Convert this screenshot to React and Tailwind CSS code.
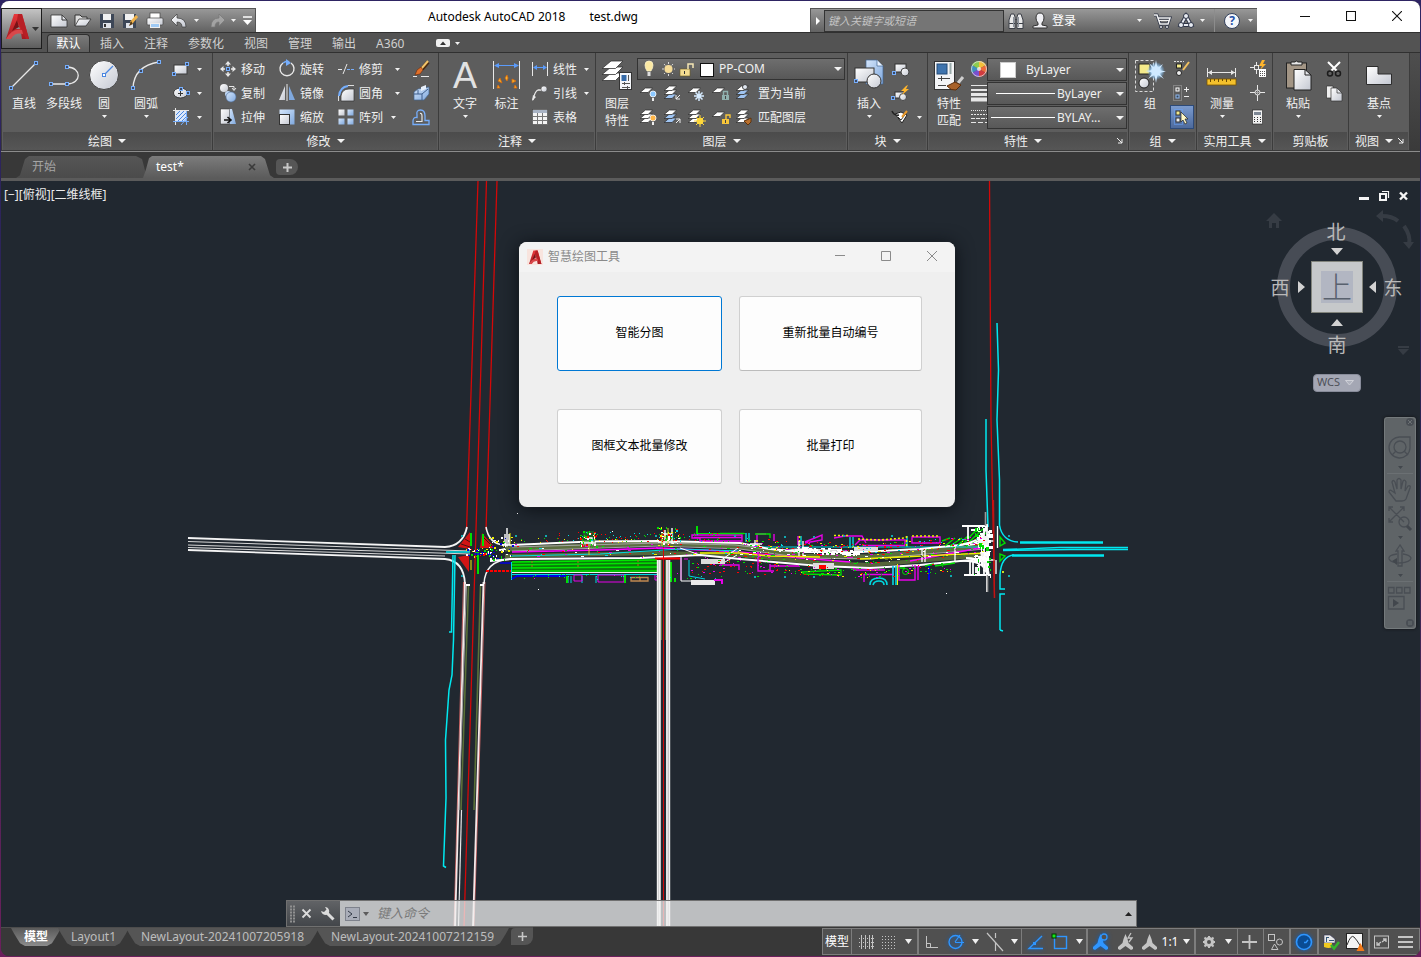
import React from "react";

/* ---------- shared pieces ---------- */

function Svg({ w = 24, h = 24, className = "", children }) {
  return (
    <svg width={w} height={h} viewBox={`0 0 ${w} ${h}`} className={`shrink-0 ${className}`} fill="none" aria-hidden="true">
      {children}
    </svg>
  );
}

function Defs() {
  return (
    <svg width="0" height="0" className="absolute" aria-hidden="true">
      <defs>
        <linearGradient id="metal" x1="0" y1="0" x2="1" y2="1">
          <stop offset="0" stopColor="#ffffff" />
          <stop offset="1" stopColor="#c4c8d2" />
        </linearGradient>
        <linearGradient id="blue" x1="0" y1="0" x2="1" y2="1">
          <stop offset="0" stopColor="#d5e6fb" />
          <stop offset="1" stopColor="#7fa8de" />
        </linearGradient>
        <linearGradient id="red" x1="0" y1="0" x2="0" y2="1">
          <stop offset="0" stopColor="#e8383c" />
          <stop offset="1" stopColor="#a31a20" />
        </linearGradient>
        <radialGradient id="glow">
          <stop offset="0" stopColor="#ffffff" />
          <stop offset="0.5" stopColor="#bfe3ff" />
          <stop offset="1" stopColor="#5da8ec" stopOpacity="0" />
        </radialGradient>
      </defs>
    </svg>
  );
}

const Sq = ({ x, y }) => <rect x={x - 1.5} y={y - 1.5} width="3" height="3" fill="#3b4a66" stroke="#76aefc" />;

function Caret({ className = "" }) {
  return (
    <svg width="5" height="3" viewBox="0 0 5 3" className={`shrink-0 ${className}`} aria-hidden="true">
      <path d="M0 0H5L2.5 3Z" fill="#f2f2f2" />
    </svg>
  );
}

function BigCaret({ className = "" }) {
  return (
    <svg width="8" height="4" viewBox="0 0 8 4" className={`shrink-0 ${className}`} aria-hidden="true">
      <path d="M0 0H8L4 4Z" fill="#f2f2f2" />
    </svg>
  );
}

function Big({ icon, lines, arrow, className = "w-10" }) {
  return (
    <button className={`flex shrink-0 flex-col items-center text-xs text-[#f0f0f0] ${className}`}>
      {icon}
      {lines.map((l) => (
        <span key={l} className="leading-[17px] whitespace-nowrap">{l}</span>
      ))}
      {arrow && <Caret className="mt-[3px]" />}
    </button>
  );
}

function Small({ icon, label, arrow, title, caret = "ml-2" }) {
  return (
    <button className="flex h-6 shrink-0 items-center text-xs whitespace-nowrap text-[#f0f0f0]" aria-label={label || title}>
      {icon}
      {label && <span className="ml-px pt-[2px]">{label}</span>}
      {arrow && <Caret className={label ? caret : "ml-1"} />}
    </button>
  );
}

function Panel({ title, arrow, corner, className, body = "", children }) {
  return (
    <section className={`flex shrink-0 flex-col border-r border-[#3c3c3c] bg-[#5d5d5d] ${className}`}>
      <div className={`flex h-[79px] pt-1 ${body}`}>{children}</div>
      <div className="mx-px flex h-[18px] items-center bg-linear-to-b from-[#4b4b4b] to-[#565656] text-xs whitespace-nowrap text-[#f0f0f0]">
        <h2 className="flex flex-1 items-center justify-center gap-[6px]">
          <span className="pt-[2px]">{title}</span>
          {arrow && <BigCaret />}
        </h2>
        {corner && (
          <Svg w={6} h={6} className="mr-1">
            <path d="M0 0L5 5M5 1V5H1" stroke="#f0f0f0" />
          </Svg>
        )}
      </div>
    </section>
  );
}

/* ---------- ribbon icons ---------- */

const light = "#e8e8e8";

const Line = () => (
  <Svg w={40} h={38}><path d="M7 31L32 6" stroke={light} strokeWidth="1.3" /><Sq x={7} y={31} /><Sq x={32} y={6} /></Svg>
);
const Poly = () => (
  <Svg w={40} h={38}><path d="M7 27H23C38 27 38 10 23 10" stroke={light} strokeWidth="1.3" /><Sq x={7} y={27} /><Sq x={23} y={27} /><Sq x={23} y={10} /></Svg>
);
const Circle = () => (
  <Svg w={40} h={38}><circle cx="20" cy="18" r="14.5" fill="url(#metal)" stroke="#444" /><path d="M20 18L29 9" stroke="#4a86e0" strokeWidth="1.3" /><rect x="18.5" y="16.5" width="3" height="3" fill="#fff" stroke="#4a86e0" /></Svg>
);
const Arc = () => (
  <Svg w={40} h={38}><path d="M7 31Q8 9 33 5" stroke={light} strokeWidth="1.3" /><Sq x={7} y={31} /><Sq x={15} y={14} /><Sq x={33} y={5} /></Svg>
);
const RectI = () => (
  <Svg><rect x="5" y="8" width="13" height="9" fill="url(#metal)" stroke="#3a3a3a" /><Sq x={18} y={7} /><Sq x={5} y={17} /></Svg>
);
const Ellipse = () => (
  <Svg><ellipse cx="11.500" cy="12" rx="7" ry="5" fill="url(#metal)" stroke="#3a3a3a" /><path d="M9 12.500H14M11.500 10V15" stroke="#333" /><Sq x={12} y={8} /><Sq x={19} y={12} /></Svg>
);
const Hatch = () => (
  <Svg><rect x="7" y="6" width="10" height="10" fill="#dbe8fb" /><path d="M7 10L11 6M7 14L15 6M9 16L17 8M13 16L17 12" stroke="#4a86e0" /><path d="M6.500 3V20M4 5.500H20" stroke={light} /><path d="M4 16.500H20M17.500 6V20M12 20L19 12" stroke="#76aefc" /></Svg>
);
const Move = () => (
  <Svg><path d="M12 5V9M12 15V19M5 12H9M15 12H19" stroke={light} strokeWidth="1.400" /><path d="M12 4L9 7.500H15ZM12 20L9 16.500H15ZM4 12L7.500 9V15ZM20 12L16.500 9V15Z" fill={light} /><rect x="10.500" y="10.500" width="3" height="3" stroke="#76aefc" fill="#3b4a66" /></Svg>
);
const Copy = () => (
  <Svg><circle cx="8" cy="7" r="4" fill="url(#metal)" /><circle cx="12" cy="13" r="3" fill="url(#blue)" /><circle cx="15" cy="16" r="5" fill="url(#blue)" stroke="#50719e" strokeWidth="0.600" /><path d="M13 5.500H18V9M16 7L18 9.500L20 7" stroke={light} /></Svg>
);
const Stretch = () => (
  <Svg><path d="M13 4H16L20 19H13Z" fill="url(#blue)" /><rect x="4.500" y="4" width="9" height="15" fill="url(#metal)" stroke="#333" strokeWidth="0.500" /><path d="M8 15H14M11.500 12L15 15L11.500 18" stroke="#111" strokeWidth="1.600" /></Svg>
);
const Rotate = () => (
  <Svg><path d="M8 6A7 7 0 1 0 16 6" stroke={light} strokeWidth="1.400" /><path d="M8 6Q12 3 14 5" stroke="#76aefc" strokeWidth="1.400" /><path d="M11 2L16 6L11 9Z" fill="#76aefc" /></Svg>
);
const Mirror = () => (
  <Svg><path d="M10 5V19H4Z" fill="url(#metal)" /><path d="M14 5V19H20Z" fill="#7fa8de" /><path d="M12 3V20" stroke={light} /></Svg>
);
const Scale = () => (
  <Svg><rect x="4.500" y="4.500" width="15" height="15" fill="url(#blue)" /><rect x="4.500" y="9.500" width="10" height="10" fill="url(#metal)" stroke="#333" /></Svg>
);
const Trim = () => (
  <Svg><path d="M4 12.500H8M9 17L13 7" stroke={light} /><path d="M13 12.500H20" stroke="#76aefc" strokeDasharray="3 1" /></Svg>
);
const Fillet = () => (
  <Svg><path d="M7 20V15Q8 8 15 8H20V20Z" fill="url(#metal)" stroke="#333" strokeWidth="0.700" /><path d="M5 15Q6 6 14 5" stroke="#76aefc" strokeWidth="2" /><path d="M4.500 20V15M14 4.500H20" stroke="#ddd" /></Svg>
);
const ArrayI = () => (
  <Svg><rect x="4.500" y="4.500" width="6" height="6" fill="url(#metal)" /><rect x="13.500" y="4.500" width="6" height="6" fill="url(#blue)" /><rect x="4.500" y="13.500" width="6" height="6" fill="url(#blue)" /><rect x="13.500" y="13.500" width="6" height="6" fill="url(#blue)" /></Svg>
);
const Brush = () => (
  <Svg><path d="M19 5L13 12" stroke="#4a2a10" strokeWidth="4" /><path d="M19 4L12 12" stroke="#f2c46a" strokeWidth="2" /><path d="M12 10L8 13L6 18L11 17L14 13Z" fill="#e2702a" stroke="#6b2a08" strokeWidth="0.600" /><path d="M4 19.500H8M12 19.500H20" stroke={light} /></Svg>
);
const Explode = () => (
  <Svg><path d="M5 11L9 8L20 6L20 13L15 19H5Z" fill="url(#blue)" stroke="#44658f" strokeWidth="0.700" /><path d="M5 13H13L19 8M13 13V19M9 9V13" stroke="#3f5f8d" /><path d="M12 6L17 4V8L12 10Z" fill="#e8f1fd" /></Svg>
);
const Offset = () => (
  <Svg><path d="M4 19.500H20V15.500H16V11Q16 5 11.500 5Q7 5 8 10V12.500Q4 12 4 16Z" stroke="#76aefc" strokeWidth="1.300" /><path d="M7 16.500H13V11Q13 8 11 8.500" stroke={light} strokeWidth="1.200" /></Svg>
);

const Dim = () => (
  <Svg w={40} h={38}>
    <path d="M6.500 4V32M32.500 4V32" stroke={light} /><path d="M8 8.500H31" stroke="#5b9bfa" /><path d="M7 8.500L12 6V11ZM32 8.500L27 6V11Z" fill="#5b9bfa" />
    <path d="M20 24L18 21L20 18L21 21ZM15 26L11 24L13 21ZM25 26L25 22L29 24ZM13 31L10 31L11 28ZM27 31L28 28L30 31Z" fill="#fbb32b" stroke="#d8690f" strokeWidth="0.800" />
  </Svg>
);
const Linear = () => (
  <Svg><path d="M4.500 5V19M19.500 5V19" stroke={light} /><path d="M6 10.500H18" stroke="#5b9bfa" /><path d="M5 10.500L9 8V13ZM19 10.500L15 8V13Z" fill="#5b9bfa" /></Svg>
);
const Leader = () => (
  <Svg><path d="M5 19Q7 10 10 9H14" stroke={light} strokeWidth="1.300" /><path d="M4 20L5 14L8 16Z" fill={light} /><circle cx="16" cy="8" r="3" fill="url(#metal)" stroke="#444" strokeWidth="0.500" /></Svg>
);
const Table = () => (
  <Svg><rect x="4.500" y="4.500" width="15" height="15" fill="#f4f4f4" stroke="#444" strokeWidth="0.600" /><rect x="5" y="5" width="14" height="3" fill="#a9b4c5" /><path d="M9.500 8V19M14.500 8V19M5 11.500H19M5 15.500H19" stroke="#777" /></Svg>
);

const Sheet = ({ y, fill = "#fff", x = 0, s = 1 }) => (
  <path d={`M${x + 6 * s} ${y}H${x + 14 * s}L${x + 9 * s} ${y + 5 * s}H${x}Z`} fill={fill} stroke="#333" strokeWidth="0.800" />
);
const Layers = () => (
  <Svg w={40} h={38}>
    <Sheet x={5} y={16} s={1.5} /><Sheet x={5} y={10} s={1.5} /><Sheet x={5} y={4} s={1.5} />
    <rect x="22.500" y="15.500" width="12" height="17" fill="#f4f6fa" stroke="#333" /><rect x="24.500" y="18" width="5" height="6" fill="#356aa8" /><path d="M31.500 18V24M25 26.500H33M25 30.500H33M27.500 25V28M30.500 29V32" stroke="#555" />
  </Svg>
);
function Stack({ mid = "#fff", bottom = "#fff", badge }) {
  return (
    <Svg>
      <Sheet x={3} y={13} fill={bottom} s={0.9} />
      <Sheet x={3} y={9} fill={mid} s={0.9} />
      <Sheet x={3} y={5} s={0.9} />
      {badge}
    </Svg>
  );
}
function OneSheet({ badge, fill = "#fff" }) {
  return <Svg><Sheet x={3} y={7} fill={fill} s={0.9} />{badge}</Svg>;
}
const Bulb = ({ c = "#8cc8ff", x = 16, y = 13 }) => (
  <g><circle cx={x} cy={y} r="3" fill={c} stroke="#fff" strokeWidth="0.800" /><rect x={x - 1} y={y + 4} width="2" height="3" fill="#eee" /></g>
);
const Lock = ({ c, open }) => (
  <g><rect x="13" y="14" width="7" height="5" fill={c} /><path d={open ? "M17 14V10H21V13" : "M14.500 14V10.500H18.500V14"} stroke={c} strokeWidth="1.400" /><path d="M16.500 15V18" stroke="#444" /></g>
);
const Flake = () => <path d="M14 10V20M9 15H19M10.500 11.500L17.500 18.500M17.500 11.500L10.500 18.500" stroke="#d6ebff" strokeWidth="1.500" />;
const Sun = ({ x = 15, y = 16, c = "#ffd83a" }) => (
  <g stroke={c}><path d={`M${x} ${y - 6}V${y + 6}M${x - 6} ${y}H${x + 6}M${x - 4} ${y - 4}L${x + 4} ${y + 4}M${x + 4} ${y - 4}L${x - 4} ${y + 4}`} /><circle cx={x} cy={y} r="3" fill={c} /></g>
);

const Insert = () => (
  <Svg w={40} h={38}>
    <path d="M17 3H28L34 9V27H17Z" fill="url(#blue)" stroke="#44658f" strokeWidth="0.700" /><path d="M28 3V9H34" fill="#eaf3ff" stroke="#44658f" strokeWidth="0.700" />
    <rect x="6" y="11" width="19" height="14" fill="url(#metal)" stroke="#333" /><circle cx="25" cy="24" r="7" fill="url(#metal)" stroke="#333" /><Sq x={7} y={24} />
  </Svg>
);
const BlockNew = () => (
  <Svg><rect x="6" y="7" width="11" height="8" fill="url(#metal)" stroke="#333" /><circle cx="16" cy="15" r="4" fill="url(#metal)" stroke="#444" /><Sq x={5} y={16} /></Svg>
);
const BlockEdit = () => (
  <Svg><rect x="6" y="11" width="9" height="6" fill="url(#metal)" stroke="#333" /><circle cx="14" cy="16" r="3.500" fill="url(#metal)" stroke="#444" /><path d="M17 5L12 10H15L13 14L20 8H17L19 4Z" fill="#ffb52c" /><Sq x={4} y={17} /></Svg>
);
const BlockAttr = () => (
  <Svg><path d="M6 9L12 7L18 10L13 18Z" fill="#fff" stroke="#222" /><path d="M3 6Q5 11 10 10" stroke="#222" strokeWidth="1.500" /><path d="M9 12L12 15L18 7" stroke="#333" /><path d="M18 6L13 12" stroke="#e99a2c" strokeWidth="2" /></Svg>
);
const MatchProp = () => (
  <Svg w={40} h={38}>
    <rect x="5.500" y="4.500" width="20" height="28" fill="#f3f4f6" stroke="#333" /><rect x="8" y="7" width="10" height="10" fill="#3f74ae" stroke="#244a76" /><path d="M21.500 6V17" stroke="#99aaaa" strokeWidth="2" /><path d="M9 21.500H21M12.500 19V24M9 28.500H17" stroke="#444" />
    <path d="M34 20L29 26" stroke="#cfcfcf" strokeWidth="3" /><path d="M26 25L32 28L27 33Q22 34 18 29Z" fill="#a8622a" stroke="#5a2d0c" />
  </Svg>
);
const Wheel = () => (
  <Svg>
    <path d="M12 12V4A8 8 0 0 1 19 8Z" fill="#f4c03a" /><path d="M12 12L19 8A8 8 0 0 1 19 16Z" fill="#ee6a3a" /><path d="M12 12L19 16A8 8 0 0 1 12 20Z" fill="#d23a3e" /><path d="M12 12V20A8 8 0 0 1 5 16Z" fill="#7a50d0" /><path d="M12 12L5 16A8 8 0 0 1 5 8Z" fill="#3f90c0" /><path d="M12 12L5 8A8 8 0 0 1 12 4Z" fill="#8ccc50" />
    <circle cx="12" cy="12" r="2" fill="#f4f4f4" opacity="0.800" /><circle cx="12" cy="12" r="7.500" stroke="#ddd" strokeWidth="0.800" />
  </Svg>
);
const Weights = () => (
  <Svg><path d="M4 4.500H20" stroke="#e6e6e6" /><path d="M4 9H20" stroke="#e6e6e6" strokeWidth="2" /><path d="M4 13.500H20" stroke="#e6e6e6" strokeWidth="3" /><path d="M4 18.500H20" stroke="#e6e6e6" strokeWidth="4" /></Svg>
);
const Types = () => (
  <Svg><path d="M4 5.500H20" stroke="#e6e6e6" strokeDasharray="1 1" /><path d="M4 9.500H20" stroke="#e6e6e6" strokeDasharray="2 1" /><path d="M4 13.500H20" stroke="#e6e6e6" strokeDasharray="4 1" /><path d="M4 17.500H20" stroke="#e6e6e6" strokeDasharray="5 2" /></Svg>
);

const GroupI = () => (
  <Svg w={40} h={38}>
    <rect x="5.500" y="3.500" width="18" height="31" stroke="#d8d8d8" strokeDasharray="3 2" /><rect x="9" y="7" width="11" height="10" fill="#f4ea8a" stroke="#222" /><circle cx="14" cy="26" r="5" fill="url(#metal)" stroke="#222" />
    <circle cx="26" cy="14" r="9" fill="url(#glow)" /><path d="M26 3L27.500 11L33 7L29 13L36 14.500L29 16L34 22L27.500 17.500L26 26L24.500 17.500L18 22L23 15.500L15 14L23 13L19 6L24.500 11Z" fill="#cfe9ff" />
  </Svg>
);
const GroupEdit = () => (
  <Svg><path d="M4 4.500H14" stroke="#ddd" strokeDasharray="2 1" /><rect x="6.500" y="7" width="5" height="4" fill="#f4ea8a" stroke="#222" /><circle cx="9" cy="16" r="2.500" fill="#eee" stroke="#222" /><path d="M19 5L13 13" stroke="#f0c060" strokeWidth="2" /></Svg>
);
const GroupAdd = () => (
  <Svg><rect x="3.500" y="4.500" width="8" height="15" stroke="#aaa" strokeDasharray="1 1" /><rect x="6" y="7" width="3" height="3" stroke="#fff" /><rect x="6" y="14" width="3" height="3" stroke="#8fb8f0" fill="#334455" /><path d="M14 8.500H19M16.500 6V11M14 15.500H19" stroke="#eee" /></Svg>
);
const GroupSel = () => (
  <span className="flex size-6 items-center justify-center border border-[#2d4a78] bg-linear-to-b from-[#7b9bcf] to-[#4d6a9c]">
    <Svg w={20} h={20}><rect x="2.500" y="2.500" width="8" height="15" stroke="#68a4ff" strokeDasharray="1 1" /><rect x="4" y="4" width="4" height="4" fill="#f4ea8a" stroke="#333" /><rect x="4" y="11" width="4" height="4" fill="#eee" stroke="#333" /><path d="M9 5L16 12H13L15 16L13 17L11 13L9 15Z" fill="#fdf7c4" stroke="#222" strokeWidth="0.700" /></Svg>
  </span>
);
const Measure = () => (
  <Svg w={40} h={38}>
    <path d="M5.500 11V20M33.500 11V20M6 15.500H33" stroke={light} /><path d="M6 15.500L10 13V18ZM33 15.500L29 13V18Z" fill={light} />
    <rect x="5" y="22" width="29" height="6" fill="#f3c02c" stroke="#7a5600" strokeWidth="0.800" /><path d="M8.500 22V25M12.500 22V24M16.500 22V25M20.500 22V24M24.500 22V25M28.500 22V24" stroke="#6b4a00" />
  </Svg>
);
const QuickSel = () => (
  <Svg><path d="M10.500 5V8M10.500 13V17M4 10.500H8" stroke={light} /><rect x="8.500" y="8.500" width="4" height="4" stroke={light} /><path d="M16 3L13 9H16L14 13L20 7H17L19 3Z" fill="#ffb52c" /><rect x="13" y="12" width="7" height="8" fill="#fff" /><path d="M14 14.500H19M14 16.500H19M14 18.500H19" stroke="#555" strokeDasharray="1 1" /></Svg>
);
const Point = () => (
  <Svg><path d="M11.500 4V20M4 11.500H19" stroke={light} /><circle cx="11.500" cy="11.500" r="2.500" stroke={light} fill="#5d5d5d" /><path d="M11.500 9V14M9 11.500H14" stroke="#aaa" /></Svg>
);
const Calc = () => (
  <Svg><rect x="6.500" y="5" width="10" height="14" fill="#f2f2f2" stroke="#222" strokeWidth="0.600" /><rect x="8" y="7" width="7" height="3" fill="#7d8794" /><path d="M8 12.500H15M8 14.500H15M8 16.500H15" stroke="#333" strokeDasharray="1 2" /></Svg>
);
const Paste = () => (
  <Svg w={40} h={38}>
    <rect x="8.500" y="6" width="20" height="25" fill="#a29585" stroke="#222" /><path d="M13 8V5H17Q18 3 20 5H24V8Z" fill="#e8e8e8" stroke="#222" /><path d="M16 12.500H27L33 18V33H16Z" fill="url(#metal)" stroke="#222" /><path d="M27 12.500V18H33" stroke="#222" />
  </Svg>
);
const Cut = () => (
  <Svg><path d="M6 5L15 14M18 5L9 14" stroke="#fff" strokeWidth="2" /><circle cx="8" cy="16.500" r="2.500" stroke="#1c1c1c" strokeWidth="1.500" /><circle cx="16" cy="16.500" r="2.500" stroke="#1c1c1c" strokeWidth="1.500" /></Svg>
);
const CopyClip = () => (
  <Svg><path d="M4.500 5H11V17H4.500Z" fill="#f0f0f0" stroke="#333" strokeWidth="0.700" /><path d="M9 7H15L20 12V20H9Z" fill="url(#metal)" stroke="#333" strokeWidth="0.700" /><path d="M15 7V12H20" stroke="#333" strokeWidth="0.700" /></Svg>
);
const Base = () => (
  <Svg w={40} h={38}><path d="M7.500 9.500H19V17H32.500V27.500H7.500Z" fill="url(#metal)" stroke="#2c2c2c" /></Svg>
);

/* ---------- title bar ---------- */

const LogoA = ({ w = 28, h = 28 }) => (
  <svg width={w} height={h} viewBox="0 0 28 28" fill="none" aria-hidden="true">
    <path fillRule="evenodd" d="M10 1H18L25 26H18L17 20H9L7 26H2ZM13 9L11 16H16Z" fill="url(#red)" />
    <path d="M18 1L25 26H22L13 7L14 1Z" fill="#b81f25" />
    <path d="M13 7L15 14L8 18Z" fill="#7a1216" />
    <path d="M2 26Q8 15 18 17L19 21Q11 19 7 26Z" fill="#d8484b" />
  </svg>
);

function QuickIcons() {
  const items = [
    ["新建", <Svg key="a"><path d="M4 6H15L20 11V18H4Z" fill="url(#metal)" stroke="#333" strokeWidth="0.800" /><path d="M15 6V11H20" stroke="#333" /></Svg>],
    ["打开", <Svg key="b"><path d="M4 17V6H9L11 8H16V11" fill="#ddd" stroke="#333" /><path d="M4 17L8 10H20L15 17Z" fill="url(#metal)" stroke="#333" strokeWidth="0.800" /></Svg>],
    ["保存", <Svg key="c"><path d="M5 5H19V19H5Z" fill="#3d4757" /><rect x="8" y="5" width="8" height="6" fill="#f1f1f1" /><rect x="8" y="14" width="8" height="5" fill="#dfe3ea" /><rect x="9" y="15" width="2" height="3" fill="#333" /></Svg>],
    ["另存为", <Svg key="d"><path d="M4 5H17V19H4Z" fill="#3d4757" /><rect x="6" y="5" width="9" height="6" fill="#f1f1f1" /><rect x="7" y="14" width="7" height="5" fill="#dfe3ea" /><path d="M18 7L12 14" stroke="#f0b24a" strokeWidth="3" /><path d="M12 12L10 17L14 15Z" fill="#5a3a10" /></Svg>],
    ["打印", <Svg key="e"><rect x="7" y="4" width="10" height="6" fill="#fff" stroke="#444" strokeWidth="0.700" /><rect x="4" y="9" width="16" height="7" rx="1" fill="url(#metal)" stroke="#444" strokeWidth="0.700" /><rect x="7.500" y="14.500" width="9" height="4" fill="#9fcaf5" stroke="#eee" /></Svg>],
    ["放弃", <Svg key="f"><path d="M4 11L10 5V9Q19 9 19 18H15Q15 13 10 13V17Z" fill="url(#metal)" stroke="#3c3c3c" strokeWidth="0.700" /></Svg>],
  ];
  return items.map(([t, i]) => <button key={t} aria-label={t}>{i}</button>);
}

function TitleBar() {
  return (
    <header className="flex h-[31px] items-stretch bg-white">
      <div className="mt-[7px] ml-[41px] flex w-[214px] items-center border-t border-r border-[#555] bg-linear-to-b from-[#989898] to-[#626262] pl-[5px]">
        <QuickIcons />
        <Caret className="ml-[3px]" />
        <button className="ml-2" aria-label="重做">
          <Svg w={20}><path d="M18 11L12 5V9Q4 9 4 18H8Q8 13 12 13V17Z" fill="#a3a3a3" stroke="#777" strokeWidth="0.700" /></Svg>
        </button>
        <Caret className="ml-1" />
        <button className="ml-[7px]" aria-label="自定义快速访问工具栏">
          <Svg w={9} h={10}><path d="M0 1H9" stroke="#fff" strokeWidth="1.500" /><path d="M0 4H9L4.500 9Z" fill="#fff" /></Svg>
        </button>
      </div>
      <h1 className="flex flex-1 items-center justify-center gap-6 text-xs whitespace-nowrap text-black">
        <span>Autodesk AutoCAD 2018</span>
        <span>test.dwg</span>
      </h1>
      <div className="mt-[7px] flex w-[447px] items-center border-t border-l border-[#555] bg-linear-to-b from-[#989898] to-[#626262]">
        <button className="flex w-[13px] justify-center" aria-label="展开">
          <Svg w={4} h={8}><path d="M0 0L4 4L0 8Z" fill="#fff" /></Svg>
        </button>
        <input aria-label="键入关键字或短语" placeholder="键入关键字或短语" className="h-[22px] w-[180px] border border-[#333] bg-[#757575] px-[3px] text-[11px] italic text-white placeholder:text-[#c4c4c4]" />
        <button aria-label="搜索">
          <Svg><path d="M7 5H10L11 8V19.500H5V11ZM17 5H14L13 8V19.500H19V11Z" fill="#e8e8e8" stroke="#3c4048" /><path d="M5 14.500H11M13 14.500H19M11 10.500H13" stroke="#3c4048" /><path d="M9.500 8V18M14.500 8V18" stroke="#8d939c" /></Svg>
        </button>
        <button className="flex items-center text-xs text-white">
          <Svg><path d="M12 4Q16 4 16 9Q16 12 14 14V16L19 17V19H5V17L10 16V14Q8 12 8 9Q8 4 12 4Z" fill="#f0f0f4" stroke="#333" /></Svg>
          登录
        </button>
        <Caret className="ml-auto" />
        <button className="ml-2" aria-label="Autodesk App Store">
          <Svg><path d="M4 6H7L10 15H18L20 9H8" stroke="#2e3547" strokeWidth="3" /><path d="M4 6H7L10 15H18L20 9H8" stroke="#f2f2f2" strokeWidth="1.500" /><path d="M9 11.500H19" stroke="#f2f2f2" /><circle cx="11" cy="18" r="1.500" fill="#f2f2f2" stroke="#2e3547" /><circle cx="17" cy="18" r="1.500" fill="#f2f2f2" stroke="#2e3547" /></Svg>
        </button>
        <button aria-label="保持连接">
          <Svg><path d="M12 7L17 16H7Z" stroke="#2e3547" strokeWidth="4" /><path d="M12 7L17 16H7Z" stroke="#e8ebf2" strokeWidth="2" /><circle cx="12" cy="7" r="2.500" fill="#e8ebf2" stroke="#2e3547" /><circle cx="7" cy="16" r="2.500" fill="#e8ebf2" stroke="#2e3547" /><circle cx="17" cy="16" r="2.500" fill="#e8ebf2" stroke="#2e3547" /></Svg>
        </button>
        <Caret className="ml-[2px]" />
        <span className="ml-[9px] h-full w-px bg-[#8c8c8c]" />
        <button className="ml-[9px] flex size-4 items-center justify-center rounded-full border border-[#33405c] bg-[#f4f6fa] text-xs font-bold text-[#2350a8]">?</button>
        <Caret className="mr-1 ml-2" />
      </div>
      <div className="flex h-[29px] w-[163px] justify-end">
        {[["最小化", "M0 5.500H10"], ["最大化", "M0.500 0.500H9.500V9.500H0.500Z"], ["关闭", "M0 0L10 10M10 0L0 10"]].map(([t, d]) => (
          <button key={t} aria-label={t} className="flex w-[46px] items-center justify-center">
            <Svg w={10} h={10}><path d={d} stroke="#111" strokeWidth="1.100" /></Svg>
          </button>
        ))}
      </div>
    </header>
  );
}

function RibbonTabs() {
  const tabs = ["插入", "注释", "参数化", "视图", "管理", "输出", "A360"];
  return (
    <nav className="flex h-[21px] items-end border-y border-[#303030] bg-[#535353] pl-[46px] text-xs text-[#d0d0d0]">
      <button className="h-[18px] w-[43px] rounded-t-sm border border-b-0 border-[#2f2f2f] bg-linear-to-b from-[#7a7a7a] to-[#5e5e5e] leading-[18px] text-white">默认</button>
      {tabs.map((t) => (
        <button key={t} className="h-[18px] px-[10px] leading-5">{t}</button>
      ))}
      <button className="ml-[22px] flex h-[18px] items-center gap-[5px]" aria-label="最小化功能区">
        <Svg w={14} h={9}><rect width="14" height="8" rx="2" fill="#f0f0f0" /><path d="M4 6L7 2.500L10 6Z" fill="#333" /></Svg>
        <Caret />
      </button>
    </nav>
  );
}

/* ---------- ribbon ---------- */

function Combo({ label, value, lead, className = "" }) {
  return (
    <div className={`flex items-center border border-[#333] bg-linear-to-b from-[#6e6e6e] to-[#585858] pr-[2px] text-xs text-[#f0f0f0] ${className}`}>
      {lead}
      <select aria-label={label} className="h-5 min-w-0 flex-1 appearance-none bg-transparent">
        <option>{value}</option>
      </select>
      <BigCaret />
    </div>
  );
}

function Ribbon() {
  return (
    <div className="flex h-[99px] items-start overflow-hidden border-b border-[#8c8c8c] bg-linear-to-b from-[#4e4e4e] to-[#3a3a3a] pl-px">
      <Panel title="绘图" arrow className="w-[211px]" body="pl-[2px]">
        <Big icon={<Line />} lines={["直线"]} />
        <Big icon={<Poly />} lines={["多段线"]} />
        <Big icon={<Circle />} lines={["圆"]} arrow />
        <Big icon={<Arc />} lines={["圆弧"]} arrow className="w-11" />
        <div className="ml-px">
          <Small icon={<RectI />} title="矩形" arrow />
          <Small icon={<Ellipse />} title="椭圆" arrow />
          <Small icon={<Hatch />} title="图案填充" arrow />
        </div>
      </Panel>

      <Panel title="修改" arrow className="w-[226px]" body="pl-[3px]">
        <div className="w-[59px]">
          <Small icon={<Move />} label="移动" />
          <Small icon={<Copy />} label="复制" />
          <Small icon={<Stretch />} label="拉伸" />
        </div>
        <div className="w-[59px]">
          <Small icon={<Rotate />} label="旋转" />
          <Small icon={<Mirror />} label="镜像" />
          <Small icon={<Scale />} label="缩放" />
        </div>
        <div className="w-[75px]">
          <Small icon={<Trim />} label="修剪" arrow caret="ml-3" />
          <Small icon={<Fillet />} label="圆角" arrow caret="ml-3" />
          <Small icon={<ArrayI />} label="阵列" arrow />
        </div>
        <div>
          <Small icon={<Brush />} title="删除" />
          <Small icon={<Explode />} title="分解" />
          <Small icon={<Offset />} title="偏移" />
        </div>
      </Panel>

      <Panel title="注释" arrow className="w-[157px]" body="pl-[6px]">
        <Big icon={<span className="h-[38px] font-['Liberation_Sans',sans-serif] text-[36px] leading-[38px] text-[#e2e2e2]">A</span>} lines={["文字"]} arrow />
        <Big icon={<Dim />} lines={["标注"]} className="w-[43px]" />
        <div>
          <Small icon={<Linear />} label="线性" arrow caret="ml-[7px]" />
          <Small icon={<Leader />} label="引线" arrow caret="ml-[7px]" />
          <Small icon={<Table />} label="表格" />
        </div>
      </Panel>

      <Panel title="图层" arrow className="w-[252px]" body="pl-px">
        <Big icon={<Layers />} lines={["图层", "特性"]} />
        <div className="flex min-w-0 flex-1 flex-col">
          <Combo
            label="图层"
            value="PP-COM"
            className="mt-px mr-[2px] h-[22px]"
            lead={
              <Svg w={81} h={20}>
                <path d="M11 2Q15 2 15 6Q15 9 13 12H9Q7 9 7 6Q7 2 11 2Z" fill="#fbe9a4" stroke="#fff6d0" strokeWidth="0.700" /><rect x="9.500" y="13" width="3" height="4" fill="#ddd" />
                <g stroke="#d8d8d8" strokeDasharray="2 10 2"><path d="M30.500 3V17M24 10H37M26 5L35 15M35 5L26 15" /></g><circle cx="30.500" cy="10" r="4" fill="#f6dc98" />
                <rect x="42" y="10" width="10" height="7" fill="#f5dd92" stroke="#6c5a20" strokeWidth="0.600" /><path d="M50 10V5H55V9" stroke="#f5e6b4" strokeWidth="1.500" /><path d="M46.500 12V15" stroke="#333" />
                <rect x="62.500" y="4.500" width="13" height="13" fill="#fff" stroke="#111" />
              </Svg>
            }
          />
          <div className="flex h-[25px] items-center pt-px">
            <Small icon={<OneSheet badge={<Bulb />} />} title="关" />
            <Small icon={<Stack bottom="#9fc4f2" badge={<path d="M19 14L15 18M15 14V18H19" stroke="#eee" />} />} title="隔离" />
            <Small icon={<OneSheet badge={<Flake />} />} title="冻结" />
            <Small icon={<OneSheet badge={<Lock c="#8fb0ae" />} />} title="锁定" />
            <Small icon={<Stack bottom="#9fc4f2" mid="#9fc4f2" badge={<circle cx="12" cy="6" r="2.500" fill="#dfe6f0" stroke="#444" />} />} label="置为当前" />
          </div>
          <div className="flex h-6 items-center">
            <Small icon={<Stack badge={<Bulb c="#ffb648" />} />} title="打开所有图层" />
            <Small icon={<Stack bottom="#9fc4f2" mid="#9fc4f2" badge={<path d="M15 18L19 14M15 14H19V18" stroke="#eee" />} />} title="取消隔离" />
            <Small icon={<Stack badge={<Sun />} />} title="解冻" />
            <Small icon={<OneSheet badge={<Lock c="#f8c63a" open />} />} title="解锁" />
            <Small icon={<Stack badge={<path d="M18 13L16 14L11 16L15 20L18 17Z" fill="#b9702e" stroke="#5e340e" />} />} label="匹配图层" />
          </div>
        </div>
      </Panel>

      <Panel title="块" arrow className="w-20" body="pl-px">
        <Big icon={<Insert />} lines={["插入"]} arrow />
        <div>
          <Small icon={<BlockNew />} title="创建块" />
          <Small icon={<BlockEdit />} title="编辑块" />
          <Small icon={<BlockAttr />} title="编辑属性" arrow />
        </div>
      </Panel>

      <Panel title="特性" arrow corner className="w-[201px]" body="pl-px">
        <Big icon={<MatchProp />} lines={["特性", "匹配"]} />
        <div className="-mr-1 -ml-[2px]">
          <Wheel />
          <Weights />
          <Types />
        </div>
        <div className="mr-px flex min-w-0 flex-1 flex-col gap-px pt-px">
          <Combo label="颜色" value="ByLayer" className="h-[23px]" lead={<span className="mr-[10px] ml-3 size-4 border border-[#ccc] bg-white" />} />
          <Combo label="线宽" value="ByLayer" className="h-[23px]" lead={<span className="mr-[2px] ml-2 h-px w-[59px] bg-white" />} />
          <Combo label="线型" value="BYLAY..." className="h-[23px]" lead={<span className="mr-[2px] ml-[3px] h-px w-16 bg-white" />} />
        </div>
      </Panel>

      <Panel title="组" arrow className="w-17" body="pl-px">
        <Big icon={<GroupI />} lines={["组"]} />
        <div>
          <Small icon={<GroupEdit />} title="组编辑" />
          <Small icon={<GroupAdd />} title="添加/删除" />
          <Small icon={<GroupSel />} title="启用组选择" />
        </div>
      </Panel>

      <Panel title="实用工具" arrow className="w-19" body="pl-[5px]">
        <Big icon={<Measure />} lines={["测量"]} arrow />
        <div className="ml-1">
          <Small icon={<QuickSel />} title="快速选择" />
          <Small icon={<Point />} title="点" />
          <Small icon={<Calc />} title="快速计算器" />
        </div>
      </Panel>

      <Panel title="剪贴板" className="w-19" body="pl-[5px]">
        <Big icon={<Paste />} lines={["粘贴"]} arrow />
        <div className="ml-1">
          <Small icon={<Cut />} title="剪切" />
          <Small icon={<CopyClip />} title="复制剪裁" />
        </div>
      </Panel>

      <Panel title="视图" arrow corner className="w-[61px]" body="justify-center">
        <Big icon={<Base />} lines={["基点"]} arrow />
      </Panel>
    </div>
  );
}

function FileTabs() {
  return (
    <div className="flex h-[29px] items-end border-b-[3px] border-[#5b5b5b] bg-[#383838] pl-[15px] text-xs">
      <button className="h-[22px] w-[131px] bg-linear-to-b from-[#565656] to-[#4b4b4b] pl-4 text-left text-[#a5a5a5] [clip-path:polygon(0_100%,4px_88%,9px_14%,13px_0,120px_0,126px_14%,131px_100%)]">开始</button>
      <div className="-ml-1 flex h-[22px] w-[131px] items-center bg-linear-to-b from-[#7c7c7c] to-[#5b5b5b] pl-[13px] [clip-path:polygon(0_100%,3px_60%,6px_10%,9px_0,118px_0,122px_14%,127px_88%,131px_100%)]">
        <button className="flex-1 text-left text-white">test*</button>
        <button className="mr-[18px]" aria-label="关闭 test">
          <Svg w={8} h={8}><path d="M1 1L7 7M7 1L1 7" stroke="#3a3a3a" strokeWidth="1.600" /></Svg>
        </button>
      </div>
      <button className="mb-[3px] ml-[2px] flex h-4 w-[22px] items-center justify-center rounded-tl-sm rounded-tr-lg rounded-br-lg rounded-bl-sm bg-[#565656]" aria-label="新图形">
        <Svg w={9} h={9}><path d="M4.500 0V9M0 4.500H9" stroke="#c8c8c8" strokeWidth="2" /></Svg>
      </button>
    </div>
  );
}

/* ---------- drawing ---------- */

function seeded(seed) {
  let s = seed;
  return () => {
    s = (s * 1664525 + 1013904223) % 4294967296;
    return s / 4294967296;
  };
}

/* centre line of the road, so that scattered marks follow its bend */
function bend(x) {
  if (x < 720) return 0;
  if (x < 860) return ((x - 720) / 140) * 8;
  return Math.max(0, 8 - ((x - 860) / 120) * 8);
}

function scatter(seed, n, x0, x1, y0, y1, colors, maxW = 2, maxH = 1) {
  const r = seeded(seed);
  return Array.from({ length: n }, () => {
    const x = Math.round(x0 + r() * (x1 - x0));
    return {
      x,
      y: Math.round(y0 + r() * (y1 - y0) + bend(x)),
      w: 1 + Math.floor(r() * maxW),
      h: 1 + Math.floor(r() * maxH),
      c: colors[Math.floor(r() * colors.length)],
    };
  });
}

const G = "#00e000", R = "#ff0000", C = "#00d8e0", M = "#e800e8", Y = "#f0f000", W = "#ffffff", B = "#0000e0", O = "#5a7038";

const marks = [
  ...scatter(1, 90, 555, 720, 532, 541, [R, R, G, C], 1),
  ...scatter(2, 40, 512, 730, 537, 542, [R, G, Y], 1),
  ...scatter(3, 70, 500, 760, 544, 557, [G, R, M, W, C, Y], 3),
  ...scatter(4, 170, 740, 985, 536, 546, [R, Y, M, G, C, R]),
  ...scatter(5, 170, 735, 985, 544, 556, [W, Y, R, M, O, G], 3),
  ...scatter(6, 120, 770, 960, 560, 570, [R, G, Y, G, M], 2),
  ...scatter(7, 60, 690, 770, 557, 574, [R, R, G, M]),
  ...scatter(8, 50, 974, 990, 526, 560, [W, W, W, G], 4, 4),
  ...scatter(9, 30, 974, 990, 556, 576, [W, W, W, G], 3, 4),
  ...scatter(10, 50, 488, 512, 536, 560, [W, G, W, Y, B], 2, 2),
  ...scatter(11, 50, 656, 680, 527, 545, [G, R, Y, W, C], 2, 2),
  ...scatter(12, 40, 580, 596, 531, 546, [G, G, W, R, C], 2, 2),
  ...scatter(13, 50, 466, 494, 547, 556, [W, G, R, Y, B], 2, 2),
  ...scatter(14, 35, 515, 735, 573, 579, [G, G, C, M], 1),
  ...scatter(15, 110, 795, 860, 542, 547, [W], 4, 2),
];

function P({ d, c, w = 1, dash }) {
  return <path d={d} stroke={c} strokeWidth={w} strokeDasharray={dash} fill="none" />;
}

const Road = React.memo(function Road() {
  return (
    <svg width="1419" height="746" viewBox="1 181 1419 746" className="absolute top-0 left-0" role="img" aria-label="道路图纸">
      {/* long red axes */}
      <P c="#d40808" w={1.3} d="M478 181L466.500 530M486.500 181L476 530L464 927M497 181L486 530M989.500 181L991 420L994.500 598" />

      {/* west road */}
      <P c="#f4f4f4" w={1.8} d="M188 538L445 547Q463 546 467 527M188 550L445 559Q464 561 465 584" />
      <P c="#d8d8d8" d="M188 541.500L470 551M188 545L470 554M188 547.500L445 556" />

      {/* south-west road */}
      <P c="#c86060" w={1} d="M463.500 582L454 927M485 582L474 927" />
      <P c="#f6e8e8" w={1.8} d="M465 582L455 927M483.500 582L473 927" />
      <P c="#a8a8a8" w={1} d="M466.500 584L459 810" />
      <P c={O} w={1.6} d="M468.500 585L461 810M480.500 585L474 810" />
      <P c="#e4e6e8" w={1.2} d="M461.500 810L458.500 927" />
      <P c="#f4f4f4" w={1.5} d="M486 527Q489 544 504 545M484 584Q485 560 512 559" />
      <path d="M466 584h4v2h-4zM480 584h4v2h-4z" fill="#fff" />

      {/* cyan boundaries */}
      <P c="#00e8f0" w={1.5} d="M453 555L451.500 632H449M455 555L453.500 640L452 675L449 690L445.500 740L446 798L443.500 866L446 867.500M446 552H470" />
      <P c="#00e8f0" w={1.5} d="M986 419V470L988 527M997 323L998.500 370L997 420L999.500 480V525Q1002 541 1018 542M1000 630V594H1005M1000 575V589H1005M1000 575Q1001 556 1014 555M1000 630L1003 631" />
      <P c="#00e8f0" w={2.4} d="M1020 542.500H1103M1012 555.500H1104" />
      <P c="#00e8f0" w={1.3} d="M1003 549.500L1060 547.500H1128M1003 550.500L1070 549.500H1128" />
      <P c={G} w={1.4} d="M1000 537V546L1005 543ZM1000 554V561L1005 556Z" />

      {/* west crossing */}
      <path d="M458 547L470 532V549ZM482 533L495 548H480ZM458 557L469 555V572Z" fill="#d21414" />
      <P c="#4a1010" d="M461 544L470 547M465 539L470 542M484 538L492 546" />
      <P c={G} w={2} d="M471 533V546M478 552V574M483 534V546" />
      <P c={Y} d="M471 560V570M510 533V546" />
      <P c={B} w={1.5} d="M474 554H490M500 563H511" />
      <P c={R} w={2} dash="3 1" d="M486 571H512" />
      <P c={W} w={1.4} d="M507 528V548M505 534V545M509 534V545M502 545H514M500 550L512 547" />

      {/* main carriageway */}
      <P c="#5c6e40" w={5} d="M505 549L660 543L735 546L800 556L870 557L985 546" />
      <P c="#55663a" w={4} d="M505 556L660 553L740 555L820 563L870 565L985 555" />
      <P c="#a4a4a4" d="M512 547L660 543L735 545L800 553M512 551L660 546L740 549L805 558L870 559L985 549" />
      <P c="#ff00ff" w={1.3} d="M512 552L600 550L660 548L740 552L800 558L850 562M910 561L985 547" />
      <P c={C} w={1.2} d="M512 556L600 554L680 549L740 551M760 547H980" />
      <P c={Y} w={1.5} d="M700 553H740L770 556L820 557M860 559L985 553" />
      <P c={W} w={2} d="M512 545L590 541.500L660 541L740 543L770 549L805 552H860L920 549L960 545L985 540" />
      <P c={W} w={2} d="M490 561L512 559L640 558L700 555L740 559L820 566L870 568L920 565L960 561L985 559" />

      {/* green bay */}
      <path d="M512 561L657 559V571L512 573Z" fill="#0a7a0a" />
      <P c="#00e600" w={1.6} d="M512 562L657 560M512 565L657 563M512 568L657 567M512 571L657 571" />
      <P c="#b06a20" dash="2 2" d="M532 561V567M578 561V568M638 560V566" />
      <P c="#f0f0f0" d="M512 572.500H657" />
      <P c={C} d="M511.500 562V580M512 574.500H660M568 576V583M571 576V583M582 576V583M596 576V583M625 576V583M689 560V576L705 579" />
      <P c={B} w={2} d="M516 576H566M512 579L517 576" />
      <P c={M} d="M574 575H582V581H574ZM598 575H624V582H598ZM655 575V580H665M681 558V580M684 559H688" />
      <P c="#c08850" w={1.3} d="M631 577.500H648V581H631ZM640 577V581" />
      <P c={G} w={2} d="M567 576V583M625 575V583M671 562V582M675 578V582M697 526V534" />
      <P c={G} d="M697 533.500H745" />

      {/* centre south road */}
      <rect x="657" y="560" width="13" height="367" fill="#212830" />
      <rect x="657" y="560" width="4" height="367" fill="#b9bab9" />
      <rect x="666" y="560" width="4" height="367" fill="#b9bab9" />
      <P c="#f2f2f2" w={1.4} d="M657.500 560V927M659.500 560V927M667 560V927M669.500 560V927" />
      <P c={O} d="M661.500 560V640M665.500 560V640" />
      <P c="#d00808" d="M663.500 530V927" />
      <P c={R} w={2} d="M655 558.500H680" />
      <P c={W} d="M681 556V581H696M680 548L700 555M720 561L738 548M725 562L737 555" />
      <rect x="701" y="559" width="24" height="5" fill="#dcdcdc" />
      <rect x="691" y="580" width="24" height="5" fill="#eaeaea" />
      <P c={M} w={2} d="M714 580H722V584" />
      <path d="M583 531H594L595 543H582ZM662 532H674L675 542H660Z" fill="#1f7a24" opacity="0.600" />
      <P c={W} w={1.4} d="M581 543H596M585 538H592V545M658 542H677M663 534H672V544M665 530V540M672 528V540" />
      <P c="#d8d020" d="M594.500 533V540M589 545V555M662 533V546M668 528V545" />

      {/* plots on the north side */}
      <P c={M} w={1.4} d="M692 535H742V541H700V538H692ZM694 537.500H742M757 545V534H766M774 534V541M798 536V545M805 542L822 535V540L805 543M834 538L845 536H862L866 543M855 545L860 540H905V545M912 537H940V543H912ZM862 545.500H905" />
      <P c={C} w={1.4} d="M746 533V542M749 533V542M801 536V545M850 537V548M853 537V548M907 536V547" />
      <P c={Y} w={1.6} dash="2 2" d="M834 535.500H848M858 539L880 540L904 538M906.500 536V546M799.500 536V546M757 540V546M912 536H940" />
      <P c={G} w={1.4} d="M720 533.500H744M755 534H770V538M942 541L950 538M945 546L955 538M950 546L962 538M958 545L968 536M964 543L980 526M968 543L984 528M972 543L986 533" />
      <path d="M788 549L805 548L850 551H878V547H854V552H800Z" fill="#dcdcdc" />
      <P c={W} w={1.3} d="M799 541V556M803 541V556M795 550H812M755 540V548M750 544H762M922 548V562M925 548V562M955 546V561" />

      {/* plots on the south side */}
      <P c={M} w={1.4} d="M720 565H739V570M758 553V571H770V564M770 571H774M853 570H885M864 574V582M864 574.500H893V567M899 565V580H915V565M918 566V580M770 566H800" />
      <path d="M813 563H834V569H813Z" fill="#dcdcdc" />
      <path d="M819 565H826V569H819Z" fill="#ff0000" />
      <path d="M802 572L841 570V575L804 574Z" fill="none" stroke={G} strokeWidth="1.300" />
      <P c={C} w={1.6} d="M870 585Q870 578 879 578Q887 578 887 585M873 585Q874 581 879 581Q884 581 884 585M893 566V585M896 566V585" />
      <P c={Y} d="M897.500 564V585" />
      <P c={B} w={2} d="M929 565V580" />
      <circle cx="905.500" cy="571.500" r="3" fill="none" stroke={G} />
      <P c={G} w={1.6} d="M935 566L955 563M899 568H905M925 566L934 564" />

      {/* east crossing */}
      <P c={W} w={1.8} d="M962 526H988M968 526V541M971 530H976M964 575H990M970 560V575M973 562V575M987 524V592M984 528V575M960 545Q984 541 986 527M960 561Q984 560 987 574M966 545Q988 545 990 530M966 558Q988 558 989 576" />
      <path d="M978 536H989V548H978ZM980 552H989V572H984ZM975 567H980V573H975Z" fill="#f4f4f4" />
      <P c="#9a9a9a" w={1.6} d="M985.500 512V526M987.500 575V592" />
      <P c={W} w={1.3} d="M997.500 526V548M996 560V574M989 541H994M989 560H995" />
      <P c="#c01414" w={1.3} d="M993.500 500L994.500 598" />

      {marks.map((m, i) => (
        <rect key={i} x={m.x} y={m.y} width={m.w} height={m.h} fill={m.c} />
      ))}
      <path d="M517 513h1v1h-1zM538 589h1v1h-1zM612 531h1v1h-1zM946 593h1v1h-1z" fill="#fff" />
      <path d="M734 535h2v2h-2zM754 576h2v2h-2zM784 536h2v2h-2zM784 576h2v2h-2zM813 536h2v2h-2zM813 576h2v2h-2zM843 535h2v2h-2zM891 535h2v2h-2zM950 575h2v2h-2zM1008 575h2v2h-2zM1008 535h2v2h-2zM461 535h2v2h-2zM461 575h2v2h-2zM515 535h2v2h-2zM545 535h2v2h-2zM655 535h2v2h-2z" fill="#12a8b0" />
      <path d="M1002 571h2v2h-2z" fill="#c8e020" />
    </svg>
  );
});

function ViewCube() {
  const label = { fill: "#b9b9b9", fontSize: 19, textAnchor: "middle" };
  return (
    <svg width="150" height="160" viewBox="1264 206 150 160" className="absolute top-[25px] right-[6px]" role="img" aria-label="ViewCube">
      <circle cx="1337" cy="287" r="53.500" fill="none" stroke="#474c55" strokeWidth="13" />
      <rect x="1311.500" y="261.500" width="51" height="51" fill="#c6c8ca" stroke="#82847c" />
      <rect x="1321" y="271" width="32" height="32" fill="#b2b6c2" />
      <text x="1337" y="298" fill="#59616e" fontSize="30" textAnchor="middle" className="font-light">上</text>
      <path d="M1331 248H1343L1337 255ZM1331 326H1343L1337 319ZM1298 281V293L1305 287ZM1376 281V293L1369 287Z" fill="#d2d2d2" />
      <text x="1336" y="239" {...label}>北</text>
      <text x="1337" y="352" {...label}>南</text>
      <text x="1280" y="295" {...label}>西</text>
      <text x="1393" y="295" {...label}>东</text>
      <path d="M1266 221L1274 213L1282 221H1279V228H1276V223H1272V228H1269V221Z" fill="#363c44" />
      <path d="M1382 216Q1392 216 1398 221M1404 226Q1411 236 1409 244" fill="none" stroke="#363c44" strokeWidth="4" />
      <path d="M1376 216L1383 210V222ZM1403 242H1414L1409 249ZM1398 346H1409V348H1398ZM1398 349H1409L1403 355Z" fill="#363c44" />
    </svg>
  );
}

function NavBar() {
  const s = { stroke: "#494e54", fill: "none", strokeWidth: 1.3 };
  return (
    <svg width="32" height="212" viewBox="0 0 32 212" className="absolute top-[236px] right-1 rounded-[3px] bg-[#5f6467] shadow-[0_0_3px_#111]" role="img" aria-label="导航栏">
      <rect x="0.500" y="0.500" width="31" height="211" rx="3" fill="none" stroke="#747a7c" />
      <circle cx="26" cy="5" r="4" fill="#494e54" /><path d="M24 3L28 7M28 3L24 7" stroke="#6b7073" />
      <path d="M16 20H26V31A10.500 10.500 0 1 1 16 20Z" {...s} /><circle cx="16" cy="30" r="6" {...s} /><path d="M8 38L12 34M24 38L20 34" {...s} />
      <path d="M14 49H19L16.500 52ZM14 119H19L16.500 122ZM14 157H19L16.500 160Z" fill="#42474d" />
      <path d="M3 56.500H29M3 164.500H29" stroke="#6b7073" />
      <path d="M12 84L5 75Q5 72 8 74L11 76L8 65Q9 62 11 65L13 72V63Q15 60 17 63V72L19 64Q21 62 22 65L21 74L24 69Q27 68 26 71L22 82Q21 84 18 84Z" {...s} />
      <path d="M5 90L20 105M20 90L5 105M5 94V90H9M16 90H20V94M5 101V105H9" {...s} /><circle cx="20" cy="105" r="5" {...s} /><path d="M23 109L27 113" stroke="#42474d" strokeWidth="3" />
      <path d="M16 128L12 134H14V149H18V134H20Z" {...s} /><path d="M13 137Q4 138 5 142Q7 146 16 146Q27 145 27 141Q26 138 19 137" {...s} /><path d="M8 144L13 141V148Z" fill="#42474d" />
      <path d="M4.500 170.500H10V176H4.500ZM12.500 170.500H18V176H12.500ZM20.500 170.500H26V176H20.500ZM4.500 179.500H20V192H4.500Z" {...s} /><path d="M9 182L15 186L9 190Z" fill="#42474d" />
      <circle cx="26" cy="206" r="4" fill="#494e54" /><path d="M24 205H28M24 207H28" stroke="#6b7073" />
    </svg>
  );
}

function Dialog() {
  const base = "rounded-[3px] border bg-[#fdfdfd] pb-[2px]";
  return (
    <div role="dialog" aria-labelledby="dialog-title" className="absolute top-[61px] left-[518px] rounded-lg bg-[#efefef] pb-[23px] text-xs text-black shadow-[0_2px_18px_#0b0f14,0_0_1px_#555]">
      <div className="flex h-[30px] items-center rounded-t-lg bg-[#f3f3f3] pl-2 text-[#8a8a8a]">
        <span className="flex size-4 items-center justify-center bg-[#f8e4de]"><LogoA w={15} h={15} /></span>
        <h2 id="dialog-title" className="ml-[5px] flex-1 pb-px">智慧绘图工具</h2>
        {[["最小化", "M0 4.500H10"], ["最大化", "M0.500 0.500H9.500V9.500H0.500Z"], ["关闭", "M0 0L10 10M10 0L0 10"]].map(([t, d]) => (
          <button key={t} aria-label={t} className="flex h-full w-[46px] items-center justify-center pb-[2px]">
            <Svg w={10} h={10}><path d={d} stroke="#8a8a8a" /></Svg>
          </button>
        ))}
      </div>
      <div className="mt-6 grid grid-cols-[165px_183px] auto-rows-[75px] gap-x-[17px] gap-y-[38px] pr-[33px] pl-[38px]">
        <button className={`border-[#0078d4] ${base}`}>智能分图</button>
        <button className={`border-[#d0d0d0] border-b-[#bcbcbc] ${base}`}>重新批量自动编号</button>
        <button className={`border-[#d0d0d0] border-b-[#bcbcbc] ${base}`}>图框文本批量修改</button>
        <button className={`border-[#d0d0d0] border-b-[#bcbcbc] ${base}`}>批量打印</button>
      </div>
    </div>
  );
}

function CommandLine() {
  return (
    <div className="absolute bottom-0 left-[285px] flex h-[27px] w-3/5 items-stretch border border-[#707070]">
      <div className="flex w-[53px] items-center bg-linear-to-b from-[#616366] to-[#43464a]">
        <Svg w={12} h={20}>{[0, 1, 2, 3, 4, 5].map((r) => <path key={r} d={`M3 ${2.5 + r * 3}h2m1 0h2`} stroke="#909090" strokeWidth="2" />)}</Svg>
        <button className="ml-[2px]" aria-label="关闭命令行"><Svg w={11} h={11}><path d="M1.500 1.500L9.500 9.500M9.500 1.500L1.500 9.500" stroke="#dcdcdc" strokeWidth="1.800" /></Svg></button>
        <button className="ml-2" aria-label="自定义"><Svg w={16} h={16}><path d="M7 7L13.500 13.500" stroke="#dcdcdc" strokeWidth="3" /><path d="M1 5Q2 9 6 9Q10 8 9 4Q8 1 5 1L6.500 3.500L4 6Z" fill="#dcdcdc" /></Svg></button>
      </div>
      <label className="flex flex-1 items-center bg-[#f0f0f0]/75 pr-1 pl-[5px]">
        <Svg w={16} h={14}><rect x="0.500" y="0.500" width="14" height="13" fill="#a9adb8" stroke="#7e828c" /><path d="M3 4L7 7L3 10M8 10.500H12" stroke="#333a46" /></Svg>
        <Svg w={6} h={4} className="ml-[2px]"><path d="M0 0H6L3 4Z" fill="#5c5c5c" /></Svg>
        <input aria-label="键入命令" placeholder="键入命令" className="ml-2 min-w-0 flex-1 bg-transparent text-[13px] italic text-black placeholder:text-[#7a7a7a]" />
        <Svg w={7} h={4}><path d="M0 4H7L3.500 0Z" fill="#222" /></Svg>
      </label>
    </div>
  );
}

function Canvas() {
  return (
    <main className="relative min-h-[746px] flex-1 overflow-hidden bg-[#212830]">
      <Road />
      <p className="absolute top-[6px] left-[3px] text-xs text-[#ececec]">[−][俯视][二维线框]</p>
      <div className="absolute top-[10px] right-3 flex gap-[9px]">
        <button aria-label="最小化图形"><Svg w={11} h={11}><path d="M0 7.500H10" stroke="#f4f4f4" strokeWidth="3" /></Svg></button>
        <button aria-label="还原图形"><Svg w={11} h={11}><rect x="1" y="3" width="6" height="6" stroke="#f4f4f4" strokeWidth="2" /><path d="M3 0.500H9.500V7" stroke="#f4f4f4" strokeWidth="1.200" /></Svg></button>
        <button aria-label="关闭图形"><Svg w={9} h={11}><path d="M1 1.500L8 8.500M8 1.500L1 8.500" stroke="#f4f4f4" strokeWidth="2.400" /></Svg></button>
      </div>
      <ViewCube />
      <button className="absolute top-[193px] right-[59px] flex h-[18px] w-12 items-center gap-[5px] rounded border border-[#888c9a] bg-[#a4a7b4] pb-px pl-[3px] text-[11px] text-[#4d5058]">
        WCS
        <Svg w={9} h={6}><path d="M0.500 0.500H8.500L4.500 5Z" fill="#b0b3be" stroke="#cfd1d8" /></Svg>
      </button>
      <NavBar />
      <Dialog />
      <CommandLine />
    </main>
  );
}

/* ---------- status bar ---------- */

const tabClip = "[clip-path:polygon(0_0,100%_0,calc(100%-3px)_30%,calc(100%-9px)_85%,calc(100%-14px)_100%,14px_100%,9px_85%,3px_30%)]";

function Group({ className = "", children }) {
  return <div className={`flex shrink-0 items-center border border-[#7d7d7d] bg-[#505050] ${className}`}>{children}</div>;
}
function Stat({ title, className = "w-6", children }) {
  return <button aria-label={title} className={`flex h-full shrink-0 items-center justify-center ${className}`}>{children}</button>;
}
const Drop = ({ className = "w-4" }) => (
  <Stat title="更多选项" className={className}><Svg w={7} h={5}><path d="M0 0H7L3.500 5Z" fill="#f0f0f0" /></Svg></Stat>
);
const blueGlow = "drop-shadow-[0_0_2px_#0a5fc0]";

function Person({ c, children, className = "" }) {
  return (
    <Svg w={20} h={20} className={className}>
      <path d="M9.500 2L11.500 7L12.500 11L17 15V17L15 18L9.500 14L4 18L2 17V15L6.500 11L7.500 7Z" fill={c} />
      {children}
    </Svg>
  );
}

function StatusBar() {
  const g = "#c4c4c4";
  const b = "#2f96ff";
  return (
    <footer className="flex h-[29px] items-start justify-between bg-[#383838]">
      <nav className="flex border-t border-[#4c4c4c] pl-[10px] text-xs text-[#bdbdbd]">
        <button className={`h-[18px] w-[50px] bg-linear-to-b from-[#5a5a5a] to-[#8c8c8c] font-bold text-white ${tabClip}`}>模型</button>
        <button className={`-ml-[3px] h-[18px] w-[71px] bg-[#555] ${tabClip}`}>Layout1</button>
        <button className={`-ml-[3px] h-[18px] w-[193px] bg-[#555] ${tabClip}`}>NewLayout-20241007205918</button>
        <button className={`-ml-[3px] h-[18px] w-[193px] bg-[#555] ${tabClip}`}>NewLayout-20241007212159</button>
        <button className="ml-[2px] flex h-[17px] w-[22px] items-center justify-center rounded-tl-sm rounded-br-lg bg-[#555]" aria-label="新建布局">
          <Svg w={9} h={9}><path d="M4.500 0V9M0 4.500H9" stroke="#c8c8c8" strokeWidth="1.600" /></Svg>
        </button>
      </nav>
      <div className="mt-px flex h-[27px] text-xs text-white">
        <Group className="w-[30px]"><Stat title="模型" className="w-7">模型</Stat></Group>
        <Group className="-ml-px w-[67px]">
          <Stat title="栅格" className="w-[27px]"><Svg w={16} h={16}><path d="M3.500 1V15M7.500 1V15M11.500 1V15M14.500 1V15" stroke={g} /><path d="M1 4.500H16M1 8.500H16M1 12.500H16" stroke={g} strokeDasharray="1 1" /></Svg></Stat>
          <Stat title="捕捉" className="w-[20px]"><Svg w={16} h={16}><path d="M1 2.500H15M1 5.500H15M1 8.500H15M1 11.500H15M1 14.500H15" stroke={g} strokeDasharray="1 2" /></Svg></Stat>
          <Drop className="w-[18px]" />
        </Group>
        <Group className="w-[104px]">
          <Stat title="正交" className="w-6"><Svg w={16} h={16}><path d="M3.500 2V13.500H15M3.500 9.500H7.500V13" stroke={g} /></Svg></Stat>
          <Stat title="极轴追踪" className="w-[26px]"><Svg w={18} h={18} className={blueGlow}><circle cx="8.500" cy="9" r="6.500" stroke={b} strokeWidth="1.400" /><path d="M8 9.500H17M8 9L13 2" stroke={b} strokeWidth="1.200" /></Svg></Stat>
          <Drop className="w-3" />
          <Stat title="等轴测草图" className="w-[27px]"><Svg w={20} h={20}><path d="M2 1L18 19M10.500 10V19M10.500 1V6" stroke={g} strokeWidth="1.200" /></Svg></Stat>
          <Drop className="w-[13px]" />
        </Group>
        <Group className="-ml-px w-[66px]">
          <Stat title="对象捕捉追踪" className="w-[26px]"><Svg w={18} h={18} className={blueGlow}><path d="M16 3L3 15.500H17" stroke={b} strokeWidth="1.400" /><rect x="7" y="9" width="3" height="3" fill={b} /></Svg></Stat>
          <Stat title="二维对象捕捉"><Svg w={18} h={18}><rect x="3.500" y="3.500" width="12" height="12" stroke={b} strokeWidth="1.400" /><rect x="1" y="1" width="4" height="4" fill="#18e818" stroke="#003300" /></Svg></Stat>
          <Drop className="w-[14px]" />
        </Group>
        <Group className="w-[108px]">
          <Stat title="注释可见性" className="w-[26px]"><Person c={b} className={blueGlow}><circle cx="13" cy="5" r="3" stroke={b} fill="#505050" strokeWidth="1.300" /></Person></Stat>
          <Stat title="自动缩放"><Person c={g}><path d="M15 1L12 6H16L13 10" stroke={g} strokeWidth="1.300" /></Person></Stat>
          <Stat title="注释比例图标"><Person c={g} /></Stat>
          <Stat title="注释比例" className="w-4">1:1</Stat>
          <Drop className="w-4" />
        </Group>
        <Group className="w-[43px]">
          <Stat title="切换工作空间" className="w-[26px]"><Svg w={14} h={14}><circle cx="7" cy="7" r="3.500" stroke={g} strokeWidth="3" /><path d="M7 1V3M7 11V13M1 7H3M11 7H13M2.500 2.500L4 4M10 10L11.500 11.500M11.500 2.500L10 4M4 10L2.500 11.500" stroke={g} strokeWidth="2" /></Svg></Stat>
          <Drop className="w-3" />
        </Group>
        <Group className="-ml-px w-[27px]"><Stat title="注释监视器"><Svg w={16} h={16}><path d="M7.500 1V15M0 8H15" stroke={g} strokeWidth="1.800" /></Svg></Stat></Group>
        <Group className="-ml-px w-[27px]"><Stat title="隔离对象"><Svg w={16} h={18}><rect x="0.500" y="1.500" width="6" height="6" stroke={g} /><circle cx="11.500" cy="9" r="3" stroke={g} /><path d="M6.500 11L3.500 16.500H10Z" stroke={g} /></Svg></Stat></Group>
        <Group className="w-7"><Stat title="硬件加速" className="w-[26px]"><Svg w={20} h={20} className={blueGlow}><circle cx="10" cy="10" r="7.500" fill="#0a4c94" stroke={b} strokeWidth="1.600" /><path d="M10 10.500H12L14 8" stroke={b} strokeWidth="1.400" /></Svg></Stat></Group>
        <Group className="w-[51px]">
          <Stat title="关联标注"><Svg w={18} h={18}><path d="M2 2H8L13 6V10H2Z" fill="#e8e8e8" stroke="#333355" strokeWidth="0.600" /><path d="M4 4.500H7M4.500 4V9M7 7.500H12" stroke="#335577" /><path d="M2 10H10V14Q7 16 2 14Z" fill="#f0c81e" /><path d="M9 12L12 15.500L17 9" stroke="#35b52c" strokeWidth="2.500" /></Svg></Stat>
          <Stat title="性能警告"><Svg w={20} h={20}><rect x="1.500" y="1.500" width="16" height="15" fill="#f4f4f4" stroke="#222" /><path d="M2 13Q6 2 9 5T16 15" stroke="#333" /><path d="M15.500 11L19.500 19H11.500Z" fill="#f07818" /></Svg></Stat>
        </Group>
        <Group className="w-[51px]">
          <Stat title="全屏显示"><Svg w={18} h={16}><rect x="1.500" y="2" width="14" height="12" stroke={g} /><path d="M9 8L13 5M13 8V5H10M8 8L4 11M4 8V11H7" stroke={g} strokeWidth="1.300" /></Svg></Stat>
          <Stat title="自定义"><Svg w={16} h={14}><path d="M0 2H15M0 7H15M0 12H15" stroke={g} strokeWidth="2" /></Svg></Stat>
        </Group>
      </div>
    </footer>
  );
}

export default function App() {
  return (
    <div className="min-h-screen bg-linear-to-b from-[#2e2463] via-[#2b2450] to-[#6b1f5c] p-px font-['Noto_Sans','Noto_Sans_CJK_SC',sans-serif]">
      <Defs />
      <div className="relative flex min-h-[calc(100vh-2px)] flex-col overflow-hidden rounded-lg bg-[#383838]">
        <TitleBar />
        <button className="absolute top-[7px] left-0 flex h-[41px] w-[41px] items-center border border-[#1c1c1c] bg-linear-to-b from-[#c4c4c4] to-[#5e5e5e] pl-[2px]" aria-label="应用程序菜单">
          <span className="-mt-1"><LogoA /></span>
          <Svg w={7} h={4}><path d="M0 0H7L3.500 4Z" fill="#333" /></Svg>
        </button>
        <RibbonTabs />
        <Ribbon />
        <FileTabs />
        <Canvas />
        <StatusBar />
      </div>
    </div>
  );
}
